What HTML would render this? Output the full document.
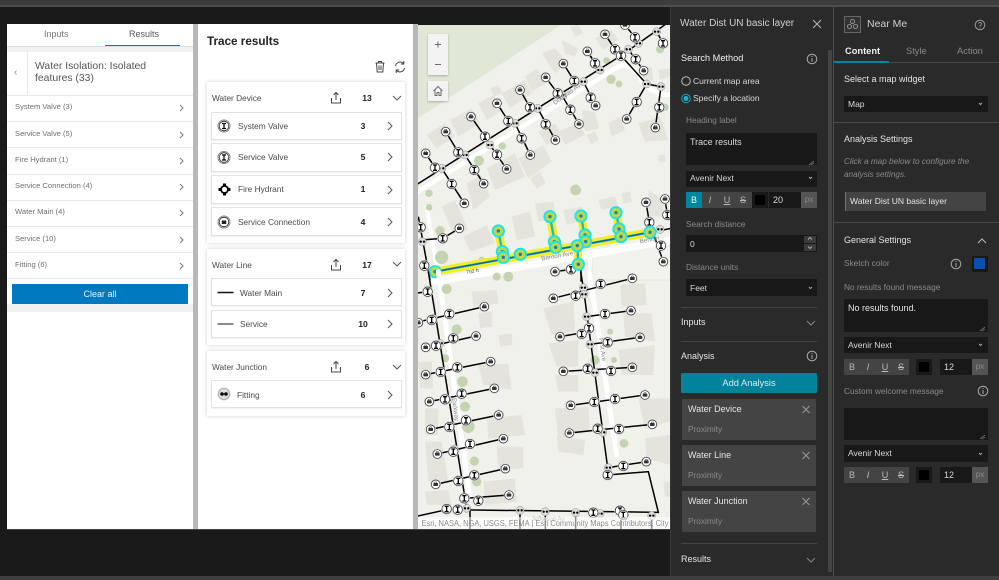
<!DOCTYPE html>
<html lang="en"><head><meta charset="utf-8"><title>Near Me</title>
<style>
html,body{margin:0;padding:0;width:999px;height:580px;overflow:hidden;background:#1a1a1a;font-family:"Liberation Sans",sans-serif}
.b{position:absolute}
.t{position:absolute;white-space:nowrap;line-height:12px;height:12px}
.g{color:#6f6f6f;font-size:7.6px;left:15px}
.sep{position:absolute;height:1px;background:#e8e8e8}
.card{position:absolute;left:207px;width:198px;background:#fff;box-shadow:0 0 4px rgba(0,0,0,.18)}
.row{position:absolute;left:211px;width:189px;background:#fff;border:1px solid #e2e2e2;box-shadow:0 1px 1px rgba(0,0,0,.06)}
.lab{color:#4a4a4a;font-size:8.3px}
.n{color:#222;font-size:8.6px;font-weight:bold;text-align:center;width:24px}
.d{color:#d8d8d8;font-size:8.5px}
.m{color:#8a8a8a;font-size:8.3px}
.h{color:#e4e4e4;font-size:9px;font-weight:bold}
.inp{position:absolute;background:#181818}
.sx{position:absolute;height:1px;background:#434343}
.item{position:absolute;left:682px;width:134px;height:41px;background:#444}
.tb{position:absolute;color:#bbb;font-size:9px;line-height:16px;text-align:center;width:16px}
</style></head><body>
<div class="b" style="left:0;top:0;width:999px;height:5px;background:#3d3d3d"></div>
<div class="b" style="left:0;top:5px;width:999px;height:2px;background:#4d4d4d"></div>
<div class="b" style="left:0;top:576px;width:999px;height:4px;background:#3f3f3f"></div>

<!-- left panel -->
<div class="b" style="left:7px;top:24px;width:186px;height:505px;background:#fff"></div>
<div class="b" style="left:193px;top:24px;width:5px;height:505px;background:#b8b8b8"></div>
<div class="b" style="left:198px;top:24px;width:215px;height:505px;background:#fff"></div>
<div class="b" style="left:413px;top:24px;width:5px;height:505px;background:#b8b8b8"></div>
<div class="b" style="left:7px;top:529px;width:663px;height:1px;background:#444"></div>
<div class="t" style="left:44px;top:28px;font-size:9px;color:#777">Inputs</div>
<div class="t" style="left:129px;top:28px;font-size:9px;color:#555">Results</div>
<div class="b" style="left:7px;top:46px;width:186px;height:6px;background:#f1f1f1;border-top:1px solid #ddd;box-sizing:border-box"></div>
<div class="b" style="left:105px;top:45px;width:75px;height:1px;background:#0a7cc4"></div>
<div class="b" style="left:27px;top:52px;width:1px;height:43px;background:#e8e8e8"></div>
<div class="t" style="left:14px;top:67px;font-size:10px;color:#888">‹</div>
<div class="t" style="left:35px;top:61px;font-size:10.4px;color:#555">Water Isolation: Isolated</div>
<div class="t" style="left:35px;top:73px;font-size:10.4px;color:#555">features (33)</div>
<div class="sep" style="left:7px;top:95px;width:186px"></div>
<div class="sep" style="left:7px;top:121px;width:186px"></div>
<div class="sep" style="left:7px;top:147px;width:186px"></div>
<div class="sep" style="left:7px;top:174px;width:186px"></div>
<div class="sep" style="left:7px;top:200px;width:186px"></div>
<div class="sep" style="left:7px;top:226px;width:186px"></div>
<div class="sep" style="left:7px;top:252px;width:186px"></div>
<div class="sep" style="left:7px;top:278px;width:186px"></div>
<div class="t g" style="top:101px">System Valve (3)</div>
<div class="t g" style="top:128px">Service Valve (5)</div>
<div class="t g" style="top:154px">Fire Hydrant (1)</div>
<div class="t g" style="top:180px">Service Connection (4)</div>
<div class="t g" style="top:206px">Water Main (4)</div>
<div class="t g" style="top:233px">Service (10)</div>
<div class="t g" style="top:259px">Fitting (6)</div>
<div class="b" style="left:12px;top:284px;width:176px;height:20px;background:#0079c1;color:#e8f2fa;font-size:9px;line-height:20px;text-align:center">Clear all</div>
<div class="b" style="left:7px;top:304px;width:186px;height:8px;background:#f1f1f1"></div>

<!-- trace -->
<div class="t" style="left:207px;top:36px;font-size:11.7px;font-weight:bold;color:#222">Trace results</div>
<div class="card" style="top:82px;height:161px"></div>
<div class="card" style="top:249px;height:96px"></div>
<div class="card" style="top:351px;height:65px"></div>
<div class="row" style="top:112px;height:26px"></div>
<div class="row" style="top:143px;height:27px"></div>
<div class="row" style="top:175px;height:27px"></div>
<div class="row" style="top:207px;height:27px"></div>
<div class="row" style="top:278px;height:26px"></div>
<div class="row" style="top:310px;height:26px"></div>
<div class="row" style="top:380px;height:26px"></div>
<div class="t lab" style="left:212px;top:92px">Water Device</div>
<div class="t n" style="left:355px;top:92px">13</div>
<div class="t lab" style="left:238px;top:120px">System Valve</div>
<div class="t n" style="left:351px;top:120px">3</div>
<div class="t lab" style="left:238px;top:151px">Service Valve</div>
<div class="t n" style="left:351px;top:151px">5</div>
<div class="t lab" style="left:238px;top:183px">Fire Hydrant</div>
<div class="t n" style="left:351px;top:183px">1</div>
<div class="t lab" style="left:238px;top:216px">Service Connection</div>
<div class="t n" style="left:351px;top:216px">4</div>
<div class="t lab" style="left:212px;top:259px">Water Line</div>
<div class="t n" style="left:355px;top:259px">17</div>
<div class="t lab" style="left:240px;top:287px">Water Main</div>
<div class="t n" style="left:351px;top:287px">7</div>
<div class="t lab" style="left:240px;top:318px">Service</div>
<div class="t n" style="left:351px;top:318px">10</div>
<div class="t lab" style="left:212px;top:361px">Water Junction</div>
<div class="t n" style="left:355px;top:361px">6</div>
<div class="t lab" style="left:237px;top:389px">Fitting</div>
<div class="t n" style="left:351px;top:389px">6</div>

<!-- map -->
<svg class="b" style="left:418px;top:25px" width="252" height="504" viewBox="418 25 252 504">
<defs>
<g id="v"><circle r="17" fill="#d8d8d8"/><circle r="14" fill="#fff" stroke="#222" stroke-width="2"/><path d="M-6-8H6M-6 8H6M0-8V8" stroke="#000" stroke-width="4" fill="none"/></g>
<g id="c"><circle r="16" fill="#d8d8d8"/><circle r="13" fill="#fff" stroke="#222" stroke-width="2"/><rect x="-7" y="-4" width="14" height="9" rx="2" fill="#333"/><rect x="-3" y="-7" width="6" height="4" fill="none" stroke="#333" stroke-width="1.500"/></g>
<g id="j"><circle r="12" fill="#ddd" stroke="#888" stroke-width="1.500"/><circle cx="-5" r="3.500" fill="#000"/><circle cx="5" r="3.500" fill="#000"/></g>
<g id="h"><circle r="17" fill="#b9d84a" stroke="#16e4ee" stroke-width="5.500"/><circle r="5" fill="#1d7fa5"/></g>
</defs>
<rect x="418" y="25" width="252" height="504" fill="#f0f1eb"/>
<polygon points="418,25 561,25 418,118" fill="#e0e7d5"/>
<g transform="translate(415,20) scale(.33333)">
<g fill="#e5e4dc">
<polygon points="35,345 90,310 120,350 65,385"/><polygon points="105,300 170,265 195,310 130,350"/><polygon points="190,250 235,225 265,270 215,300"/><polygon points="260,220 330,180 350,220 285,265"/><polygon points="330,170 365,145 395,190 350,215"/><polygon points="380,100 420,85 460,130 420,160"/><polygon points="225,205 250,195 262,218 238,230"/><polygon points="465,20 490,15 505,40 480,50"/><polygon points="540,55 590,30 610,60 565,90"/><polygon points="440,60 490,85 480,110 450,100"/><polygon points="430,335 490,310 510,345 450,375"/><polygon points="370,335 420,310 440,345 395,375"/><polygon points="310,415 385,375 410,425 340,475"/><polygon points="215,445 300,400 330,470 240,510"/><polygon points="155,490 200,465 225,530 175,570"/><polygon points="345,475 375,455 392,490 365,505"/><polygon points="515,345 540,335 552,360 528,372"/><polygon points="500,270 540,275 552,325 510,335"/><polygon points="580,310 615,290 630,330 590,350"/><polygon points="670,310 735,290 760,360 690,365"/><polygon points="730,150 765,145 765,170 735,180"/><polygon points="660,150 710,140 715,180 665,180"/>
<polygon points="80,560 120,540 160,630 115,640"/><polygon points="145,650 215,615 240,670 165,695"/><polygon points="290,590 345,575 360,650 305,660"/><polygon points="360,550 415,545 425,595 370,605"/><polygon points="445,570 500,560 515,600 455,615"/><polygon points="550,540 600,530 610,560 560,570"/><polygon points="620,520 645,515 650,545 625,550"/><polygon points="700,510 745,540 745,590 700,590"/><polygon points="730,405 750,403 752,425 732,428"/><polygon points="530,700 765,660 765,780 535,780" fill="#f3f3ee" stroke="#e5e5dc" stroke-width="2"/>
</g>
<g fill="none" stroke="#fff" stroke-linecap="round">
<path d="M0 520L610 140Q640 125 670 165Q700 225 770 225" stroke-width="14"/>
<path d="M60 785L770 660" stroke-width="22"/>
<path d="M35 560L72 780" stroke-width="12"/>
<path d="M525 700V790" stroke-width="12"/>
</g>
<g fill="#c4d4b0"><circle cx="42" cy="520" r="11"/><circle cx="192" cy="422" r="15"/><circle cx="262" cy="378" r="11"/><circle cx="482" cy="510" r="16"/><circle cx="588" cy="178" r="14"/><circle cx="612" cy="192" r="10"/><circle cx="80" cy="712" r="20"/><circle cx="75" cy="632" r="14"/><circle cx="42" cy="562" r="10"/><circle cx="735" cy="88" r="12"/><circle cx="750" cy="262" r="11"/><circle cx="200" cy="720" r="10"/><circle cx="575" cy="122" r="10"/></g>
<g fill="none" stroke="#000" stroke-width="4.5">
<path d="M-5 500L618 107L770 0"/>
<path d="M60 443L32 400M130 397L92 335M210 350L168 290M280 303L246 250M345 262L315 210M428 220L392 172M478 183L445 131M540 130L517 94L555 150M600 88L570 43M660 52L630 15"/>
<path d="M80 445L148 550M150 405L206 491M225 375L275 447M300 310L346 405M368 265L421 360M440 225L492 312M505 185L542 257M640 88L686 152M618 107L695 192L738 200M695 192L635 297M738 200L721 323M725 35L744 70"/>
<path d="M705 637L770 625M693 547L703 607L745 725M750 537L757 585"/>
<path d="M10 590L45 780M17 660L83 655L133 625M420 755L468 748L500 742M498 740V785"/>
</g>
<use href="#c" x="32" y="400"/><use href="#c" x="92" y="335"/><use href="#c" x="168" y="290"/><use href="#c" x="246" y="250"/><use href="#c" x="315" y="210"/><use href="#c" x="392" y="172"/><use href="#c" x="445" y="131"/><use href="#c" x="517" y="94"/><use href="#c" x="570" y="43"/><use href="#c" x="630" y="15"/><use href="#c" x="148" y="550"/><use href="#c" x="206" y="491"/><use href="#c" x="275" y="447"/><use href="#c" x="346" y="405"/><use href="#c" x="421" y="360"/><use href="#c" x="492" y="312"/><use href="#v" x="527" y="233"/><use href="#c" x="542" y="257"/><use href="#c" x="686" y="152"/><use href="#c" x="635" y="297"/><use href="#c" x="721" y="323"/><use href="#c" x="693" y="547"/><use href="#c" x="745" y="725"/><use href="#c" x="750" y="537"/><use href="#c" x="133" y="625"/><use href="#c" x="420" y="755"/>
<use href="#j" x="80" y="445"/><use href="#j" x="150" y="405"/><use href="#j" x="225" y="375"/><use href="#j" x="300" y="310"/><use href="#j" x="368" y="265"/><use href="#j" x="440" y="225"/><use href="#j" x="505" y="185"/><use href="#j" x="555" y="150"/><use href="#j" x="640" y="88"/><use href="#j" x="670" y="70"/><use href="#j" x="725" y="35"/><use href="#j" x="695" y="192"/><use href="#j" x="738" y="200"/><use href="#j" x="735" y="628"/><use href="#j" x="22" y="665"/>
<use href="#v" x="60" y="443"/><use href="#v" x="130" y="397"/><use href="#v" x="210" y="350"/><use href="#v" x="280" y="303"/><use href="#v" x="345" y="262"/><use href="#v" x="428" y="220"/><use href="#v" x="478" y="183"/><use href="#v" x="540" y="130"/><use href="#v" x="600" y="88"/><use href="#v" x="618" y="107"/><use href="#v" x="660" y="52"/><use href="#v" x="662" y="118"/><use href="#v" x="110" y="492"/><use href="#v" x="178" y="450"/><use href="#v" x="246" y="404"/><use href="#v" x="320" y="355"/><use href="#v" x="392" y="313"/><use href="#v" x="466" y="269"/><use href="#v" x="665" y="246"/><use href="#v" x="733" y="262"/><use href="#v" x="744" y="70"/><use href="#v" x="703" y="607"/><use href="#v" x="738" y="677"/><use href="#v" x="757" y="585"/><use href="#v" x="83" y="655"/><use href="#v" x="28" y="737"/><use href="#v" x="17" y="622"/><use href="#v" x="468" y="748"/>
<g fill="none" stroke-linecap="round">
<path d="M60 755L705 637M250 633L265 710M405 590L422 680M498 588L512 665M603 578L618 650M487 677L490 733" stroke="#f4ee22" stroke-width="25"/>
<path d="M60 755L705 637M250 633L265 710M405 590L422 680M498 588L512 665M603 578L618 650M487 677L490 733" stroke="#1cb6d8" stroke-width="7"/>
<path d="M60 755L705 637" stroke="#1f5f96" stroke-width="4"/>
</g>
<use href="#h" x="60" y="755"/><use href="#h" x="262" y="695"/><use href="#h" x="265" y="712"/><use href="#h" x="316" y="703"/><use href="#h" x="418" y="665"/><use href="#h" x="422" y="682"/><use href="#h" x="510" y="645"/><use href="#h" x="512" y="665"/><use href="#h" x="487" y="677"/><use href="#h" x="612" y="627"/><use href="#h" x="618" y="650"/><use href="#h" x="705" y="637"/><use href="#h" x="250" y="633"/><use href="#h" x="405" y="590"/><use href="#h" x="498" y="588"/><use href="#h" x="603" y="578"/><use href="#h" x="490" y="733"/>
<g font-family="Liberation Sans" font-size="19" fill="#8a8a8a"><text transform="translate(420,255) rotate(-36)">Douglas Av</text><text transform="translate(380,722) rotate(-10)">Benton Ave</text><text transform="translate(155,762) rotate(-10)" font-size="15" fill="#444">702 ft</text><text transform="translate(675,670) rotate(-10)">Benton</text></g>
</g>
<g transform="translate(415,275) scale(.33333)">
<g fill="#e5e4dc">
<polygon points="170,50 245,45 250,85 175,95"/><polygon points="190,115 230,110 232,155 195,160"/><polygon points="250,180 290,175 292,210 255,215"/><polygon points="190,270 280,265 290,345 205,330"/><polygon points="215,430 320,420 330,480 220,490"/><polygon points="245,515 325,515 325,580 250,585"/><polygon points="205,620 300,610 305,680 210,690"/><polygon points="30,650 100,645 110,690 35,690"/><polygon points="10,260 50,260 55,340 15,340"/><polygon points="30,400 70,400 70,480 30,480"/><polygon points="30,500 80,500 100,620 40,620"/>
<polygon points="385,100 475,80 480,170 410,180"/><polygon points="400,205 490,195 490,275 425,275"/><polygon points="420,300 490,300 490,350 430,350"/><polygon points="420,400 520,395 525,470 430,490"/><polygon points="425,480 510,495 505,540 430,530"/><polygon points="615,30 690,25 695,90 620,95"/><polygon points="625,115 710,115 720,200 630,185"/><polygon points="610,225 720,210 715,300 620,300"/><polygon points="670,370 765,370 765,440 690,460"/><polygon points="690,490 765,480 765,570 695,550"/><polygon points="745,620 765,620 765,665 750,665"/>
</g>
<g fill="none" stroke="#fff" stroke-linecap="round">
<path d="M70 -10L165 670" stroke-width="15"/>
<path d="M525 0L605 540" stroke-width="15"/>
<path d="M0 740L770 745" stroke-width="16"/>
</g>
<g fill="#c4d4b0"><circle cx="95" cy="42" r="15"/><circle cx="125" cy="163" r="15"/><circle cx="142" cy="320" r="16"/><circle cx="150" cy="395" r="15"/><circle cx="160" cy="455" r="19"/><circle cx="178" cy="558" r="14"/><circle cx="185" cy="620" r="14"/><circle cx="90" cy="250" r="12"/><circle cx="540" cy="255" r="14"/><circle cx="597" cy="255" r="9"/><circle cx="627" cy="505" r="13"/><circle cx="585" cy="170" r="9"/><circle cx="280" cy="5" r="15"/><circle cx="245" cy="5" r="12"/></g>
<g fill="none" stroke="#000" stroke-width="4.5">
<path d="M40 -10L155 700"/><path d="M0 55L38 50M0 143L208 95M32 217L183 183M32 299L227 260M43 380L238 340M47 463L251 420M67 537L265 491M62 628L271 581M148 670L282 660"/>
<path d="M497 -10L505 38L578 578"/><path d="M415 70L652 10M515 125L648 107M435 185L522 170M525 208L675 187M445 289L652 277M467 391L690 360M463 474L712 448M580 578L694 560"/>
<path d="M0 725L95 704L730 712L700 590L578 600"/>
<path d="M315 706V770M391 710V770M482 713V770M618 707V770M710 722V770M165 700V770"/>
</g>
<use href="#c" x="208" y="95"/><use href="#c" x="10" y="143"/><use href="#c" x="183" y="183"/><use href="#c" x="32" y="217"/><use href="#c" x="227" y="260"/><use href="#c" x="32" y="299"/><use href="#c" x="238" y="340"/><use href="#c" x="43" y="380"/><use href="#c" x="251" y="420"/><use href="#c" x="47" y="463"/><use href="#c" x="265" y="491"/><use href="#c" x="67" y="537"/><use href="#c" x="271" y="581"/><use href="#c" x="62" y="628"/><use href="#c" x="282" y="660"/>
<use href="#c" x="652" y="10"/><use href="#c" x="415" y="70"/><use href="#c" x="648" y="107"/><use href="#c" x="435" y="185"/><use href="#c" x="675" y="187"/><use href="#c" x="652" y="277"/><use href="#c" x="445" y="289"/><use href="#c" x="690" y="360"/><use href="#c" x="467" y="391"/><use href="#c" x="712" y="448"/><use href="#c" x="463" y="474"/><use href="#c" x="694" y="560"/>
<use href="#j" x="75" y="205"/><use href="#j" x="505" y="38"/><use href="#j" x="507" y="58"/><use href="#j" x="515" y="125"/><use href="#j" x="525" y="208"/><use href="#j" x="540" y="293"/><use href="#j" x="563" y="472"/><use href="#j" x="580" y="578"/><use href="#j" x="155" y="700"/><use href="#j" x="315" y="706"/><use href="#j" x="391" y="710"/><use href="#j" x="482" y="713"/><use href="#j" x="555" y="716"/><use href="#j" x="710" y="722"/><use href="#j" x="118" y="522"/><use href="#j" x="100" y="375"/><use href="#j" x="55" y="130"/>
<use href="#v" x="38" y="50"/><use href="#v" x="50" y="135"/><use href="#v" x="103" y="117"/><use href="#v" x="63" y="212"/><use href="#v" x="115" y="190"/><use href="#v" x="77" y="291"/><use href="#v" x="127" y="277"/><use href="#v" x="90" y="373"/><use href="#v" x="140" y="356"/><use href="#v" x="103" y="456"/><use href="#v" x="153" y="436"/><use href="#v" x="115" y="530"/><use href="#v" x="165" y="507"/><use href="#v" x="130" y="618"/><use href="#v" x="178" y="601"/><use href="#v" x="148" y="670"/><use href="#v" x="190" y="677"/><use href="#v" x="95" y="702"/><use href="#v" x="128" y="704"/>
<use href="#v" x="557" y="27"/><use href="#v" x="482" y="62"/><use href="#v" x="570" y="117"/><use href="#v" x="522" y="160"/><use href="#v" x="500" y="177"/><use href="#v" x="578" y="202"/><use href="#v" x="518" y="281"/><use href="#v" x="588" y="288"/><use href="#v" x="538" y="381"/><use href="#v" x="600" y="372"/><use href="#v" x="548" y="461"/><use href="#v" x="612" y="462"/><use href="#v" x="625" y="573"/><use href="#v" x="578" y="600"/><use href="#v" x="535" y="713"/><use href="#v" x="615" y="707"/><use href="#v" x="625" y="720"/>
<g font-family="Liberation Sans" font-size="18" fill="#8a8a8a"><text transform="translate(552,190) rotate(82)">First Ave</text><text transform="translate(112,370) rotate(83)">Parkway</text><text x="350" y="738">Jefferson Av</text></g>
</g>
<rect x="418" y="517" width="252" height="12" fill="#fff" fill-opacity=".55"/>
<text x="421.500" y="526" font-family="Liberation Sans" font-size="8.3" fill="#8a8a8a" textLength="247" lengthAdjust="spacingAndGlyphs">Esri, NASA, NGA, USGS, FEMA | Esri Community Maps Contributors, City</text>
<rect x="428" y="34" width="20" height="41" fill="#f3f3f3" style="filter:drop-shadow(0 1px 1px rgba(0,0,0,.25))"/>
<rect x="428" y="81" width="20" height="20" fill="#f3f3f3" style="filter:drop-shadow(0 1px 1px rgba(0,0,0,.25))"/>
<path d="M435 44.500H441M438 41.500V47.500M435 64.500H441" stroke="#6e6e6e" stroke-width="1" fill="none"/>
<path d="M433.500 91L438 86.500L442.500 91M435 90V95.500H437V92.500H439V95.500H441V90" stroke="#6e6e6e" stroke-width="1" fill="none"/>
</svg>

<!-- config panel 1 -->
<div class="b" style="left:670px;top:7px;width:163px;height:569px;background:#2a2a2a;border-left:1px solid #3a3a3a;box-sizing:border-box"></div>
<div class="b" style="left:833px;top:7px;width:1px;height:569px;background:#4d4d4d"></div>
<div class="b" style="left:834px;top:7px;width:165px;height:569px;background:#2a2a2a"></div>
<div class="b" style="left:828px;top:50px;width:4px;height:522px;background:#444"></div>
<div class="t" style="left:680px;top:18px;font-size:10px;color:#d0d0d0">Water Dist UN basic layer</div>
<div class="t h" style="left:681px;top:52px;font-weight:normal;font-size:9.200px;color:#eee">Search Method</div>
<div class="t d" style="left:693px;top:75px">Current map area</div>
<div class="t d" style="left:693px;top:92px">Specify a location</div>
<div class="t m" style="left:686px;top:114px">Heading label</div>
<div class="inp" style="left:686px;top:133px;width:131px;height:32px"></div>
<div class="t d" style="left:690px;top:136px;font-size:9px">Trace results</div>
<div class="inp" style="left:686px;top:171px;width:131px;height:16px"></div>
<div class="t d" style="left:690px;top:172px">Avenir Next</div>
<div class="b" style="left:686px;top:192px;width:66px;height:16px;background:#444"></div>
<div class="b" style="left:686px;top:192px;width:16px;height:16px;background:#00869e"></div>
<div class="tb" style="left:686px;top:192px;color:#dff">B</div>
<div class="tb" style="left:702px;top:192px;font-style:italic">I</div>
<div class="tb" style="left:719px;top:192px;text-decoration:underline">U</div>
<div class="tb" style="left:735px;top:192px;text-decoration:line-through">S</div>
<div class="inp" style="left:752px;top:192px;width:16px;height:16px"></div>
<div class="b" style="left:755px;top:195px;width:10px;height:10px;background:#000"></div>
<div class="inp" style="left:769px;top:192px;width:32px;height:16px"></div>
<div class="t d" style="left:773px;top:194px;font-size:9px">20</div>
<div class="b" style="left:801px;top:192px;width:16px;height:16px;background:#555;color:#8a8a8a;font-size:8px;line-height:16px;text-align:center">px</div>
<div class="t m" style="left:686px;top:218px">Search distance</div>
<div class="inp" style="left:686px;top:235px;width:131px;height:17px"></div>
<div class="t d" style="left:690px;top:238px">0</div>
<div class="b" style="left:804px;top:236px;width:12px;height:7px;background:#3a3a3a"></div>
<div class="b" style="left:804px;top:244px;width:12px;height:7px;background:#3a3a3a"></div>
<div class="t m" style="left:686px;top:261px">Distance units</div>
<div class="inp" style="left:686px;top:279px;width:131px;height:17px"></div>
<div class="t d" style="left:690px;top:282px">Feet</div>
<div class="sx" style="left:681px;top:307px;width:136px"></div>
<div class="t d" style="left:681px;top:316px;font-size:9px;color:#e6e6e6">Inputs</div>
<div class="sx" style="left:681px;top:341px;width:136px"></div>
<div class="t d" style="left:681px;top:350px;font-size:9px;color:#e6e6e6">Analysis</div>
<div class="b" style="left:681px;top:373px;width:136px;height:20px;background:#00839b;border-radius:1px;color:#d9eef2;font-size:9.300px;line-height:20px;text-align:center">Add Analysis</div>
<div class="item" style="top:399px"></div>
<div class="item" style="top:445px"></div>
<div class="item" style="top:491px"></div>
<div class="t d" style="left:688px;top:403px;font-size:9px;color:#e4e4e4">Water Device</div>
<div class="t m" style="left:688px;top:423px">Proximity</div>
<div class="t d" style="left:688px;top:449px;font-size:9px;color:#e4e4e4">Water Line</div>
<div class="t m" style="left:688px;top:469px">Proximity</div>
<div class="t d" style="left:688px;top:495px;font-size:9px;color:#e4e4e4">Water Junction</div>
<div class="t m" style="left:688px;top:515px">Proximity</div>
<div class="sx" style="left:681px;top:543px;width:136px"></div>
<div class="t d" style="left:681px;top:553px;font-size:9px;color:#e6e6e6">Results</div>

<!-- config panel 2 -->
<div class="t" style="left:867px;top:18px;font-size:10.500px;color:#cfcfcf">Near Me</div>
<div class="t" style="left:845px;top:45px;font-size:9.300px;font-weight:bold;color:#eee">Content</div>
<div class="t" style="left:906px;top:45px;font-size:9.300px;color:#8a8a8a">Style</div>
<div class="t" style="left:957px;top:45px;font-size:9.300px;color:#8a8a8a">Action</div>
<div class="b" style="left:834px;top:62px;width:165px;height:1px;background:#4a4a4a"></div>
<div class="b" style="left:834px;top:61px;width:55px;height:2px;background:#00869e"></div>
<div class="t d" style="left:844px;top:73px;font-size:9px;color:#e4e4e4">Select a map widget</div>
<div class="inp" style="left:844px;top:96px;width:144px;height:16px"></div>
<div class="t d" style="left:848px;top:98px">Map</div>
<div class="b" style="left:834px;top:122px;width:165px;height:1px;background:#4a4a4a"></div>
<div class="t d" style="left:844px;top:133px;font-size:9px;color:#e4e4e4">Analysis Settings</div>
<div class="t m" style="left:844px;top:156px;font-style:italic;font-size:8.200px">Click a map below to configure the</div>
<div class="t m" style="left:844px;top:169px;font-style:italic;font-size:8.200px">analysis settings.</div>
<div class="b" style="left:845px;top:192px;width:141px;height:19px;background:#444"></div>
<div class="b" style="left:845px;top:192px;width:1px;height:19px;background:#00a0b8"></div>
<div class="t d" style="left:850px;top:195px;color:#e4e4e4">Water Dist UN basic layer</div>
<div class="b" style="left:834px;top:222px;width:165px;height:1px;background:#4a4a4a"></div>
<div class="t d" style="left:844px;top:234px;font-size:9px;color:#e4e4e4">General Settings</div>
<div class="t m" style="left:844px;top:257px">Sketch color</div>
<div class="inp" style="left:972px;top:256px;width:16px;height:16px"></div>
<div class="b" style="left:974px;top:258px;width:11px;height:11px;background:#0a4fae"></div>
<div class="t m" style="left:844px;top:281px">No results found message</div>
<div class="inp" style="left:844px;top:299px;width:144px;height:33px"></div>
<div class="t d" style="left:848px;top:302px;font-size:9px;color:#e4e4e4">No results found.</div>
<div class="inp" style="left:844px;top:337px;width:144px;height:16px"></div>
<div class="t d" style="left:848px;top:339px">Avenir Next</div>
<div class="b" style="left:844px;top:359px;width:65px;height:16px;background:#444"></div>
<div class="tb" style="left:844px;top:359px">B</div>
<div class="tb" style="left:860px;top:359px;font-style:italic">I</div>
<div class="tb" style="left:877px;top:359px;text-decoration:underline">U</div>
<div class="tb" style="left:893px;top:359px;text-decoration:line-through">S</div>
<div class="inp" style="left:916px;top:359px;width:16px;height:16px"></div>
<div class="b" style="left:919px;top:362px;width:10px;height:10px;background:#000"></div>
<div class="inp" style="left:940px;top:359px;width:32px;height:16px"></div>
<div class="t d" style="left:944px;top:361px;font-size:9px">12</div>
<div class="b" style="left:972px;top:359px;width:16px;height:16px;background:#555;color:#8a8a8a;font-size:8px;line-height:16px;text-align:center">px</div>
<div class="t m" style="left:844px;top:385px">Custom welcome message</div>
<div class="inp" style="left:844px;top:408px;width:144px;height:32px"></div>
<div class="inp" style="left:844px;top:445px;width:144px;height:17px"></div>
<div class="t d" style="left:848px;top:447px">Avenir Next</div>
<div class="b" style="left:844px;top:467px;width:65px;height:16px;background:#444"></div>
<div class="tb" style="left:844px;top:467px">B</div>
<div class="tb" style="left:860px;top:467px;font-style:italic">I</div>
<div class="tb" style="left:877px;top:467px;text-decoration:underline">U</div>
<div class="tb" style="left:893px;top:467px;text-decoration:line-through">S</div>
<div class="inp" style="left:916px;top:467px;width:16px;height:16px"></div>
<div class="b" style="left:919px;top:470px;width:10px;height:10px;background:#000"></div>
<div class="inp" style="left:940px;top:467px;width:32px;height:16px"></div>
<div class="t d" style="left:944px;top:469px;font-size:9px">12</div>
<div class="b" style="left:972px;top:467px;width:16px;height:16px;background:#555;color:#8a8a8a;font-size:8px;line-height:16px;text-align:center">px</div>

<!-- icon overlay -->
<svg class="b" style="left:0;top:0;pointer-events:none" width="999" height="580" viewBox="0 0 999 580" fill="none">
<path d="M180 105L183 108L180 111M180 132L183 135L180 138M180 158L183 161L180 164M180 184L183 187L180 190M180 210L183 213L180 216M180 237L183 240L180 243M180 263L183 266L180 269" stroke="#777" stroke-width="1"/>
<path d="M375.500 63H384.500M378.500 63V61.500H381.500V63M376.500 63.500L377.200 72H382.800L383.500 63.500M379 65.500V70M381 65.500V70" stroke="#444" stroke-width="1"/>
<path d="M395.500 66A4.700 4.700 0 0 1 403.500 63.500M404.500 68A4.700 4.700 0 0 1 396.500 70.500M403.800 61V64H400.800M396.200 73V70H399.200" stroke="#444" stroke-width="1"/>
<g stroke="#444" stroke-width="1"><path d="M331.500 98V103H340.500V98M336 100V93M333.500 95L336 92.500L338.500 95"/><path d="M331.500 265V270H340.500V265M336 267V260M333.500 262L336 259.500L338.500 262"/><path d="M331.500 367V372H340.500V367M336 369V362M333.500 364L336 361.500L338.500 364"/></g>
<g stroke="#555" stroke-width="1"><path d="M393 96L397 100L401 96M393 262L397 266L401 262M393 365L397 369L401 365"/>
<path d="M388 122L392 126L388 130M388 153L392 157L388 161M388 186L392 190L388 194M388 218L392 222L388 226M388 289L392 293L388 297M388 320L392 324L388 328M388 391L392 395L388 399"/></g>
<g stroke="#888" stroke-width="1"><circle cx="224" cy="126" r="6" fill="#fff"/><circle cx="224" cy="157.500" r="6" fill="#fff"/><circle cx="224" cy="222" r="6" fill="#fff"/></g>
<g stroke="#222" stroke-width=".8"><circle cx="224" cy="126" r="4.800"/><circle cx="224" cy="157.500" r="4.800"/><circle cx="224" cy="222" r="4.800"/></g>
<circle cx="224" cy="394" r="5.800" fill="#ddd" stroke="#aaa"/>
<path d="M222 123.500H226M222 128.500H226M224 123.500V128.500M222 155H226M222 160H226M224 155V160" stroke="#000" stroke-width="1.200"/>
<rect x="221.800" y="220.500" width="4.400" height="3.500" fill="#222"/>
<circle cx="222" cy="394" r="1.800" fill="#000"/><circle cx="226" cy="394" r="1.800" fill="#000"/>
<circle cx="224.500" cy="189.500" r="3.500" stroke="#000" stroke-width="1.800"/>
<path d="M224.500 183.500V186M224.500 193V195.500M218.500 189.500H221M228 189.500H230.500" stroke="#000" stroke-width="3"/>
<path d="M217.500 292.500H233.500" stroke="#111" stroke-width="1.500"/>
<path d="M217.500 324H233.500" stroke="#666" stroke-width="1.500"/>
<path d="M813 20L821 28M821 20L813 28" stroke="#bbb" stroke-width="1"/>
<g stroke="#aaa" stroke-width="1"><circle cx="812" cy="59" r="4.800"/><path d="M812 58V62M812 56V57"/><circle cx="812" cy="356" r="4.800"/><path d="M812 355V359M812 353V354"/><circle cx="956" cy="264" r="4.800"/><path d="M956 263V267M956 261V262"/><circle cx="983" cy="391" r="4.800"/><path d="M983 390V394M983 388V389"/></g>
<circle cx="686" cy="81" r="4.300" stroke="#bbb" stroke-width="1"/>
<circle cx="686" cy="98.500" r="4.300" stroke="#19a5c0" stroke-width="1"/><circle cx="686" cy="98.500" r="2.500" fill="#19b5d0"/>
<path d="M809 177L810.500 178.500L812 177M809 287L810.500 288.500L812 287M979 103L980.500 104.500L982 103M979 344L980.500 345.500L982 344M979 453L980.500 454.500L982 453M808 239.500L810 237.500L812 239.500M808 246.500L810 248.500L812 246.500" stroke="#aaa" stroke-width="1"/>
<path d="M807 321L811 325L815 321M807 558L811 562L815 558" stroke="#888" stroke-width="1"/>
<path d="M802.500 406L809.500 413M809.500 406L802.500 413M802.500 452L809.500 459M809.500 452L802.500 459M802.500 498L809.500 505M809.500 498L802.500 505" stroke="#999" stroke-width="1"/>
<path d="M814 163L811 165M814 161L809 165M985 329L982 331M985 327L980 331M985 437L982 439M985 435L980 439" stroke="#888" stroke-width=".7"/>
<rect x="844.500" y="16.500" width="16" height="16" stroke="#666" fill="#333"/>
<g stroke="#aaa" stroke-width=".8"><circle cx="852.500" cy="21.500" r="2"/><circle cx="849.500" cy="26.500" r="2"/><circle cx="855.500" cy="26.500" r="2"/></g>
<circle cx="980" cy="25" r="4.800" stroke="#999" stroke-width="1"/>
<path d="M978.500 23.500A1.500 1.500 0 1 1 980 25.500V26.500M980 27.500V28.500" stroke="#999" stroke-width=".9"/>
<path d="M978 243L982 239L986 243" stroke="#bbb" stroke-width="1"/>
</svg>
</body></html>
